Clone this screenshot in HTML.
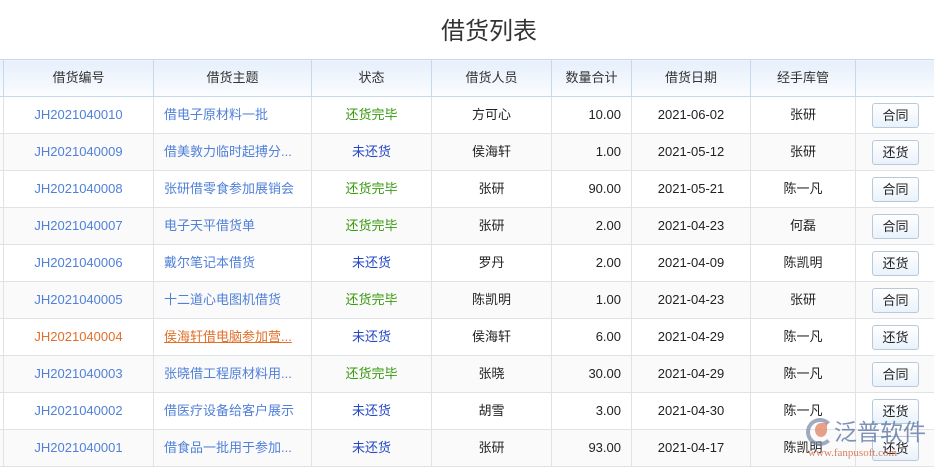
<!DOCTYPE html>
<html><head><style>
body{margin:0;width:934px;height:470px;overflow:hidden;background:#fff;font-family:"Liberation Sans","Noto Sans CJK SC",sans-serif;font-size:13px;color:#222}
h1{margin:0;height:60px;line-height:64px;text-align:center;font-weight:normal;font-size:24px;color:#333;padding-left:44px}
table{position:absolute;top:59px;left:-1px;border-collapse:collapse;table-layout:fixed;width:936px;font-size:13px}
td,th{border:1px solid #dfe3e8;height:36px;line-height:20px;padding:0;text-align:center;white-space:nowrap;overflow:hidden;vertical-align:middle}
th{font-weight:normal;background:linear-gradient(#e6effb,#fbfdff);border-color:#c6d8ec;color:#333}
tr:nth-child(odd) td{background:#fafafa}
.b{color:#5080d8}.l{text-align:left;padding-left:10px;color:#5080d8}
.g{color:#3a9a10}.n{color:#2448c8}.r{text-align:right;padding-right:10px}
.o{color:#e0702a}.ou{color:#e0702a;text-decoration:underline}
.btn{display:inline-block;width:45px;height:23px;line-height:23px;border:1px solid #b9c9dc;border-radius:3px;background:linear-gradient(#fff,#e9f2fb);font-size:13px;vertical-align:middle}
.wm{position:absolute;left:834px;top:418px;font-size:23px;line-height:28px;color:#5570a0;opacity:.75;white-space:nowrap}
.wm2{position:absolute;left:808px;top:447px;font-size:11px;color:#d0603a;font-family:"Liberation Serif",serif;opacity:.8;white-space:nowrap}
.logo{position:absolute;left:806px;top:418px;width:20px;height:20px;border-radius:50%;border:4px solid #7888a8;border-right-color:transparent;opacity:.7}
.logo2{position:absolute;left:815px;top:423px;width:12px;height:14px;border-radius:50% 0 50% 50%;background:#e08060;opacity:.75}
</style></head><body>
<h1>借货列表</h1>
<table>
<colgroup><col style="width:4px"><col style="width:150px"><col style="width:158px"><col style="width:120px"><col style="width:120px"><col style="width:80px"><col style="width:119px"><col style="width:105px"><col style="width:80px"></colgroup>
<tr><th></th><th>借货编号</th><th>借货主题</th><th>状态</th><th>借货人员</th><th>数量合计</th><th>借货日期</th><th>经手库管</th><th></th></tr>
<tr><td></td><td class="b">JH2021040010</td><td class="l">借电子原材料一批</td><td class="g">还货完毕</td><td>方可心</td><td class="r">10.00</td><td>2021-06-02</td><td>张研</td><td><span class="btn">合同</span></td></tr>
<tr><td></td><td class="b">JH2021040009</td><td class="l">借美敦力临时起搏分...</td><td class="n">未还货</td><td>侯海轩</td><td class="r">1.00</td><td>2021-05-12</td><td>张研</td><td><span class="btn">还货</span></td></tr>
<tr><td></td><td class="b">JH2021040008</td><td class="l">张研借零食参加展销会</td><td class="g">还货完毕</td><td>张研</td><td class="r">90.00</td><td>2021-05-21</td><td>陈一凡</td><td><span class="btn">合同</span></td></tr>
<tr><td></td><td class="b">JH2021040007</td><td class="l">电子天平借货单</td><td class="g">还货完毕</td><td>张研</td><td class="r">2.00</td><td>2021-04-23</td><td>何磊</td><td><span class="btn">合同</span></td></tr>
<tr><td></td><td class="b">JH2021040006</td><td class="l">戴尔笔记本借货</td><td class="n">未还货</td><td>罗丹</td><td class="r">2.00</td><td>2021-04-09</td><td>陈凯明</td><td><span class="btn">还货</span></td></tr>
<tr><td></td><td class="b">JH2021040005</td><td class="l">十二道心电图机借货</td><td class="g">还货完毕</td><td>陈凯明</td><td class="r">1.00</td><td>2021-04-23</td><td>张研</td><td><span class="btn">合同</span></td></tr>
<tr><td></td><td class="o">JH2021040004</td><td class="l ou">侯海轩借电脑参加营...</td><td class="n">未还货</td><td>侯海轩</td><td class="r">6.00</td><td>2021-04-29</td><td>陈一凡</td><td><span class="btn">还货</span></td></tr>
<tr><td></td><td class="b">JH2021040003</td><td class="l">张晓借工程原材料用...</td><td class="g">还货完毕</td><td>张晓</td><td class="r">30.00</td><td>2021-04-29</td><td>陈一凡</td><td><span class="btn">合同</span></td></tr>
<tr><td></td><td class="b">JH2021040002</td><td class="l">借医疗设备给客户展示</td><td class="n">未还货</td><td>胡雪</td><td class="r">3.00</td><td>2021-04-30</td><td>陈一凡</td><td><span class="btn">还货</span></td></tr>
<tr><td></td><td class="b">JH2021040001</td><td class="l">借食品一批用于参加...</td><td class="n">未还货</td><td>张研</td><td class="r">93.00</td><td>2021-04-17</td><td>陈凯明</td><td><span class="btn">还货</span></td></tr>
</table>
<div class="logo"></div><div class="logo2"></div>
<div class="wm">泛普软件</div>
<div class="wm2">www.fanpusoft.com</div>
</body></html>
